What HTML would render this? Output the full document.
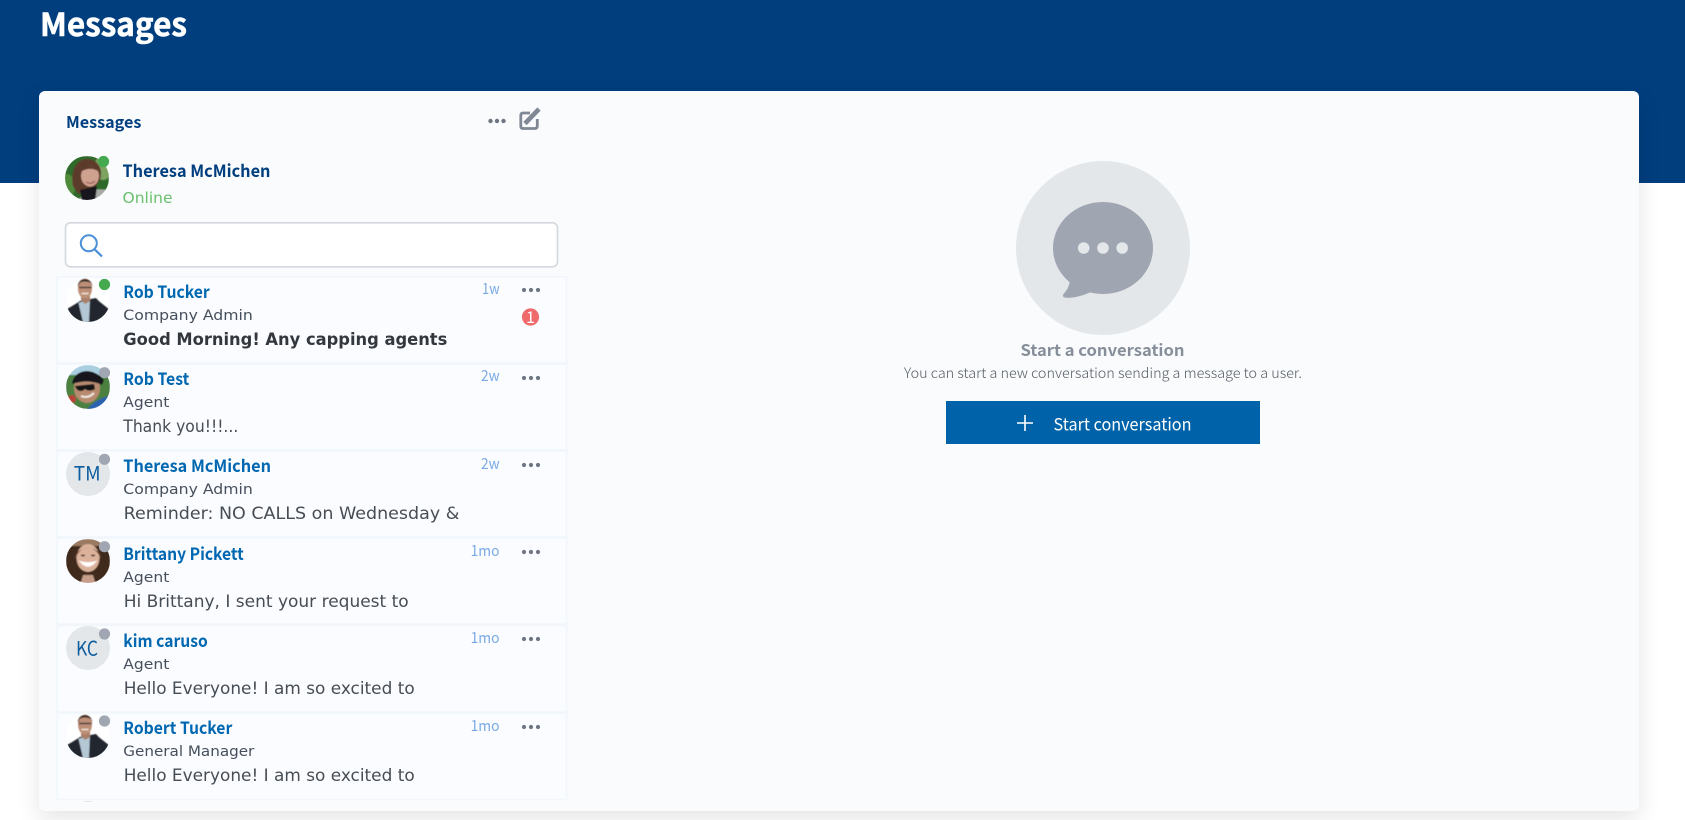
<!DOCTYPE html>
<html lang="en"><head><meta charset="utf-8"><title>Messages</title>
<style>
html,body{margin:0;padding:0;width:1685px;height:820px;overflow:hidden;background:#fff}
#hd{position:absolute;left:0;top:0;width:1685px;height:183px;background:#003e7e}
#card{position:absolute;left:39px;top:91px;width:1600px;height:720px;background:#f9fbfd;border-radius:6px;box-shadow:0 8px 24px rgba(0,0,0,.11)}
svg{position:absolute;left:0;top:0}
.s{font-family:"Noto Sans CJK JP","Liberation Sans",sans-serif}
.m{font-family:"DejaVu Sans","Liberation Sans",sans-serif}
.n{font-size:17px;font-weight:700;fill:#0067b0}
.r{font-size:14.5px;fill:#464f5b}
.t{font-size:17px;fill:#474d54}
.w{font-size:15px;fill:#7aaae4;text-anchor:end}
.d{fill:#6f7682}
.o{fill:#a0a7b2}
</style></head><body>
<div id="hd"></div><div id="card"></div>
<svg width="1685" height="820" viewBox="0 0 1685 820" xmlns="http://www.w3.org/2000/svg">
<defs>
<clipPath id="c"><circle cx="22" cy="22" r="22"/></clipPath>
<filter id="b" x="-10%" y="-10%" width="120%" height="120%"><feGaussianBlur stdDeviation=".55"/></filter>
<g id="man"><circle cx="22" cy="22" r="22" fill="#fff"/>
<g clip-path="url(#c)"><g filter="url(#b)">
<path d="M-2 46V33C4 29 10 26 14 23L30 20C34 25 40 28 46 34V46Z" fill="#23252e"/>
<path d="M12.5 25L24 20.5L23 44L17 44Z" fill="#b4c7d5"/>
<path d="M15 15H24V23L19 26L15 22Z" fill="#a97f69"/>
<ellipse cx="19" cy="10.5" rx="7" ry="10" fill="#bd8f77"/>
<path d="M12 9C11 -1 26 -2 26.500 9L25 5C21 3 16 3 13.500 5Z" fill="#3b2f2b"/>
<path d="M13 9.500H25.500" stroke="#4b403d" stroke-width="1.5"/>
<path d="M15.500 15.500H22.500" stroke="#f3e9e2" stroke-width="1.400"/>
</g></g></g>
</defs>

<text class="s" x="40" y="36" font-size="32" font-weight="700" fill="#fff" stroke="#fff" stroke-width=".6" textLength="147" lengthAdjust="spacingAndGlyphs">Messages</text>
<text class="s" x="66" y="128" font-size="16" font-weight="700" fill="#003e7e" textLength="75.4" lengthAdjust="spacingAndGlyphs">Messages</text>

<circle class="d" cx="490.5" cy="121" r="2.2"/><circle class="d" cx="497" cy="121" r="2.2"/><circle class="d" cx="503.5" cy="121" r="2.2"/>
<path d="M530 113H523Q520.800 113 520.800 115.500V126Q520.800 128.500 523 128.500H534.500Q537.300 128.500 537.300 126V119" fill="none" stroke="#7f8894" stroke-width="2.8"/>
<path d="M525 123.500L539 109" stroke="#7f8894" stroke-width="4.600" fill="none"/>

<!-- own avatar -->
<g transform="translate(65,156)"><g clip-path="url(#c)"><g filter="url(#b)">
<rect width="44" height="44" fill="#2f6b2b"/>
<ellipse cx="38" cy="12" rx="9" ry="12" fill="#7ea361"/>
<ellipse cx="2" cy="30" rx="8" ry="12" fill="#4f8a3b"/>
<path d="M8 30C5 14 12 2 23 3C34 4 38 14 35 24L28 34L13 38Z" fill="#5d3a2c"/>
<path d="M14 46C16 34 28 32 44 34V46Z" fill="#a9aba8"/>
<path d="M15 34L32 30L30 46L17 46Z" fill="#17171a"/>
<ellipse cx="25" cy="20" rx="9" ry="10.500" fill="#cfa290"/>
<path d="M14 17C17 8 30 6 36 17C30 12 22 11 14 17Z" fill="#5d3a2c"/>
<path d="M21 26Q26 29 30 25" stroke="#9d5f5f" stroke-width="1.300" fill="none"/>
</g></g></g>
<circle cx="103.500" cy="161.500" r="5.600" fill="#44a94f"/>
<text class="s" x="122.500" y="177" font-size="17" font-weight="700" fill="#003e7e" textLength="148" lengthAdjust="spacingAndGlyphs">Theresa McMichen</text>
<text class="m" x="122.500" y="203" font-size="15" fill="#69c06d" textLength="50" lengthAdjust="spacingAndGlyphs">Online</text>

<!-- search -->
<rect x="65.500" y="222.800" width="492" height="44" rx="5" fill="#fff" stroke="#d3d7de" stroke-width="1.600"/>
<circle cx="88.800" cy="243.300" r="8" fill="none" stroke="#4a90d9" stroke-width="2"/>
<path d="M94.600 249.300L102 256.500" stroke="#4a90d9" stroke-width="2.200"/>

<!-- list rows -->
<g fill="#fafcff" stroke="#f0f6fb" stroke-width="1.400">
<rect x="57" y="276.700" width="509.500" height="86.400"/>
<rect x="57" y="364" width="509.500" height="86"/>
<rect x="57" y="451" width="509.500" height="86"/>
<rect x="57" y="538" width="509.500" height="86"/>
<rect x="57" y="625.500" width="509.500" height="86.500"/>
<rect x="57" y="713" width="509.500" height="86.500"/>
</g>
<rect x="57" y="800" width="509.500" height="2" fill="#f9fbfd"/>
<path d="M82 802Q88 800 94 802Z" fill="#e4e7ea"/>

<!-- row 1 -->
<use href="#man" transform="translate(66,278)"/>
<circle cx="104.500" cy="284.500" r="5.600" fill="#44a94f"/>
<text class="s n" x="123.300" y="298" textLength="86.500" lengthAdjust="spacingAndGlyphs">Rob Tucker</text>
<text class="m r" x="123.300" y="320" textLength="129.500" lengthAdjust="spacingAndGlyphs">Company Admin</text>
<text class="m t" x="123.300" y="345" font-weight="700" style="fill:#33383e" textLength="324" lengthAdjust="spacingAndGlyphs">Good Morning! Any capping agents</text>
<text class="s w" x="499.600" y="294" textLength="17.600" lengthAdjust="spacingAndGlyphs">1w</text>
<circle class="d" cx="524" cy="290" r="2.100"/><circle class="d" cx="531" cy="290" r="2.100"/><circle class="d" cx="538" cy="290" r="2.100"/>
<circle cx="530.500" cy="317" r="8.600" fill="#ef6a6a"/>
<text class="s" x="530.500" y="323" font-size="16" fill="#fff" text-anchor="middle">1</text>

<!-- row 2 -->
<g transform="translate(66,365)"><g clip-path="url(#c)"><g filter="url(#b)">
<rect width="44" height="44" fill="#4c8040"/>
<path d="M0 0H44V10H0Z" fill="#a9cfe0"/>
<ellipse cx="6" cy="34" rx="4" ry="4" fill="#b9423a"/>
<path d="M20 46C26 37 35 33 46 30V46Z" fill="#2a62b0"/>
<ellipse cx="21" cy="23" rx="13" ry="15" fill="#b88a70"/>
<path d="M6 19C7 6 25 0 38 15L36 20C26 15 15 16 6 19Z" fill="#15171c"/>
<path d="M9 21L28 19L29 24C24 27 20 25 19 24C16 27 11 27 9 21Z" fill="#121316"/>
<path d="M15 31Q22 34 28 28" stroke="#efeae2" stroke-width="2" fill="none"/>
</g></g></g>
<circle class="o" cx="104.500" cy="372.700" r="5.600"/>
<text class="s n" x="123.300" y="385" textLength="66" lengthAdjust="spacingAndGlyphs">Rob Test</text>
<text class="m r" x="123.300" y="407" textLength="46" lengthAdjust="spacingAndGlyphs">Agent</text>
<text class="m t" x="123.300" y="432" textLength="115" lengthAdjust="spacingAndGlyphs">Thank you!!!...</text>
<text class="s w" x="499.600" y="381" textLength="18.600" lengthAdjust="spacingAndGlyphs">2w</text>
<circle class="d" cx="524" cy="378" r="2.100"/><circle class="d" cx="531" cy="378" r="2.100"/><circle class="d" cx="538" cy="378" r="2.100"/>

<!-- row 3 -->
<circle cx="88" cy="474" r="22" fill="#e4e7ea"/>
<text class="s" x="73.700" y="480.700" font-size="20" fill="#0c5c9e" textLength="27" lengthAdjust="spacingAndGlyphs">TM</text>
<circle class="o" cx="104.500" cy="459.300" r="5.600"/>
<text class="s n" x="123.300" y="472" textLength="147.700" lengthAdjust="spacingAndGlyphs">Theresa McMichen</text>
<text class="m r" x="123.300" y="494" textLength="129.500" lengthAdjust="spacingAndGlyphs">Company Admin</text>
<text class="m t" x="123.700" y="519" textLength="335.700" lengthAdjust="spacingAndGlyphs">Reminder: NO CALLS on Wednesday &amp;</text>
<text class="s w" x="499.600" y="469" textLength="18.600" lengthAdjust="spacingAndGlyphs">2w</text>
<circle class="d" cx="524" cy="465" r="2.100"/><circle class="d" cx="531" cy="465" r="2.100"/><circle class="d" cx="538" cy="465" r="2.100"/>

<!-- row 4 -->
<g transform="translate(66,539)"><g clip-path="url(#c)"><g filter="url(#b)">
<rect width="44" height="44" fill="#3f291f"/>
<path d="M0 0H44V7H0Z" fill="#9a7a60"/>
<path d="M14 46L17 36H27L30 46Z" fill="#c59d88"/>
<ellipse cx="22" cy="19" rx="11.500" ry="14" fill="#dcb29b"/>
<path d="M9 20C9 6 35 5 35 20C31 11 27 9 22 9C17 9 13 11 9 20Z" fill="#6a4a33"/>
<path d="M15 23Q22 31 29 23Q22 25 15 23Z" fill="#fff" stroke="#fff" stroke-width="1.500"/>
<path d="M15 16.500H19M25 16.500H29" stroke="#4a3024" stroke-width="1.600"/>
</g></g></g>
<circle class="o" cx="104.500" cy="546.700" r="5.600"/>
<text class="s n" x="123.300" y="560" textLength="120.400" lengthAdjust="spacingAndGlyphs">Brittany Pickett</text>
<text class="m r" x="123.300" y="582" textLength="46" lengthAdjust="spacingAndGlyphs">Agent</text>
<text class="m t" x="123.700" y="607" textLength="285" lengthAdjust="spacingAndGlyphs">Hi Brittany, I sent your request to</text>
<text class="s w" x="499.600" y="556" textLength="29" lengthAdjust="spacingAndGlyphs">1mo</text>
<circle class="d" cx="524" cy="552" r="2.100"/><circle class="d" cx="531" cy="552" r="2.100"/><circle class="d" cx="538" cy="552" r="2.100"/>

<!-- row 5 -->
<circle cx="88" cy="648" r="22" fill="#e4e7ea"/>
<text class="s" x="76" y="655.300" font-size="20" fill="#0c5c9e" textLength="22" lengthAdjust="spacingAndGlyphs">KC</text>
<circle class="o" cx="104.500" cy="634" r="5.600"/>
<text class="s n" x="123.300" y="647" textLength="84.500" lengthAdjust="spacingAndGlyphs">kim caruso</text>
<text class="m r" x="123.300" y="669" textLength="46" lengthAdjust="spacingAndGlyphs">Agent</text>
<text class="m t" x="123.700" y="694" textLength="291" lengthAdjust="spacingAndGlyphs">Hello Everyone! I am so excited to</text>
<text class="s w" x="499.600" y="643" textLength="29" lengthAdjust="spacingAndGlyphs">1mo</text>
<circle class="d" cx="524" cy="639" r="2.100"/><circle class="d" cx="531" cy="639" r="2.100"/><circle class="d" cx="538" cy="639" r="2.100"/>

<!-- row 6 -->
<use href="#man" transform="translate(66,714)"/>
<circle class="o" cx="104.500" cy="721" r="5.600"/>
<text class="s n" x="123.300" y="734" textLength="109" lengthAdjust="spacingAndGlyphs">Robert Tucker</text>
<text class="m r" x="123.300" y="756" textLength="131" lengthAdjust="spacingAndGlyphs">General Manager</text>
<text class="m t" x="123.700" y="781" textLength="291" lengthAdjust="spacingAndGlyphs">Hello Everyone! I am so excited to</text>
<text class="s w" x="499.600" y="731" textLength="29" lengthAdjust="spacingAndGlyphs">1mo</text>
<circle class="d" cx="524" cy="727" r="2.100"/><circle class="d" cx="531" cy="727" r="2.100"/><circle class="d" cx="538" cy="727" r="2.100"/>

<!-- right pane -->
<circle cx="1103" cy="248" r="87" fill="#e4e7ea"/>
<ellipse cx="1103" cy="248" rx="50" ry="46" fill="#9fa6b1"/>
<path d="M1070 280C1069 288 1066 291 1064 293.500C1061 296.500 1064 298 1069 297.800C1077 297.500 1084 295 1091 292Z" fill="#9fa6b1"/>
<circle cx="1083.700" cy="248" r="5.800" fill="#e4e7ea"/><circle cx="1103" cy="248" r="5.800" fill="#e4e7ea"/><circle cx="1122.200" cy="248" r="5.800" fill="#e4e7ea"/>
<text class="s" x="1020.500" y="356" font-size="16" font-weight="700" fill="#868e9a" textLength="164" lengthAdjust="spacingAndGlyphs">Start a conversation</text>
<text class="s" x="904" y="378" font-size="14" font-weight="300" fill="#555b63" textLength="398" lengthAdjust="spacingAndGlyphs">You can start a new conversation sending a message to a user.</text>
<rect x="946" y="401" width="314" height="43" fill="#0063a9"/>
<path d="M1017 423H1033M1025 415V431" stroke="#fff" stroke-width="1.600"/>
<text class="s" x="1053.500" y="430.300" font-size="17" fill="#fff" textLength="138" lengthAdjust="spacingAndGlyphs">Start conversation</text>
</svg>
</body></html>
